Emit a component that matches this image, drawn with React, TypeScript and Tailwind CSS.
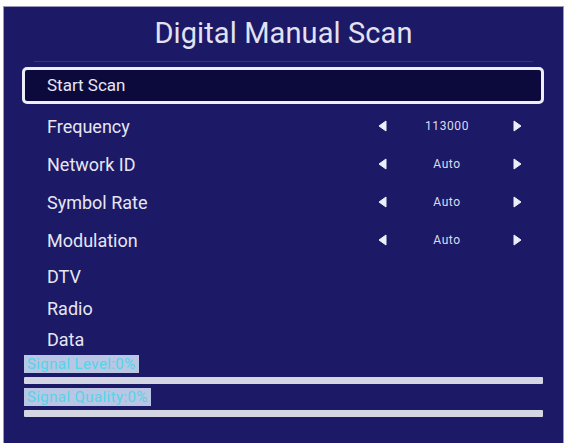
import React from 'react';

type Row = { label: string; value?: string };

const tunerRows: Row[] = [
  { label: 'Frequency', value: '113000' },
  { label: 'Network ID', value: 'Auto' },
  { label: 'Symbol Rate', value: 'Auto' },
  { label: 'Modulation', value: 'Auto' },
];

function Arrow({ dir }: { dir: 'left' | 'right' }) {
  return (
    <svg width="9" height="12" viewBox="0 0 9 12" className="shrink-0">
      {dir === 'left' ? (
        <path d="M8 1 L8 11 L1 6 Z" fill="#eceef8" strokeLinejoin="round" stroke="#eceef8" strokeWidth="1" />
      ) : (
        <path d="M1 1 L1 11 L8 6 Z" fill="#eceef8" strokeLinejoin="round" stroke="#eceef8" strokeWidth="1" />
      )}
    </svg>
  );
}

function SignalBar({ label }: { label: string }) {
  return (
    <>
      <div className="self-start bg-[#b9c6e4] px-[3px] h-[18px] flex items-center text-[15px] text-[#55d4e8] leading-none tracking-[0.4px]">
        {label}
      </div>
      <div className="mt-[4px] h-[7px] w-[519px] bg-[#d4d6e4] rounded-[1px]" />
    </>
  );
}

export default function App() {
  return (
    <div className="w-[567px] h-[443px] bg-white pt-[6px] pl-[3px] overflow-hidden font-['Roboto','Liberation_Sans',sans-serif]">
      <div className="w-[561px] h-[437px] bg-[#1c1967] border-x border-t border-[#9a9ab8] flex flex-col">
        <div className="h-[54px] flex items-center justify-center text-[29px] text-[#e2e2f2] tracking-[0.1px]">
          Digital Manual Scan
        </div>
        <div className="h-px mx-[30px] bg-[#34328a]" />

        <div className="mt-[5px] ml-[18px] w-[522px] h-[37px] border-[3px] border-[#eeeef8] rounded-[5px] bg-[#0c0a3c] flex items-center pl-[22px] text-[17px] text-[#e6e6f2]">
          Start Scan
        </div>

        <div className="mt-[3px] flex flex-col">
          {tunerRows.map((row) => (
            <div key={row.label} className="h-[38px] flex items-center pl-[43px] pr-[41px] text-[18px] text-[#e6e6f2]">
              <span className="flex-1">{row.label}</span>
              <Arrow dir="left" />
              <span className="w-[120px] text-center text-[12px] tracking-[0.6px] text-[#dcdcee]">{row.value}</span>
              <span className="ml-[6px] flex">
                <Arrow dir="right" />
              </span>
            </div>
          ))}
          <div className="h-[34px] flex items-center pl-[43px] text-[18px] text-[#e6e6f2]">DTV</div>
          <div className="h-[30px] flex items-center pl-[43px] text-[18px] text-[#e6e6f2]">Radio</div>
          <div className="h-[32px] flex items-center pl-[43px] text-[18px] text-[#e6e6f2]">Data</div>
        </div>

        <div className="ml-[20px] flex flex-col">
          <SignalBar label="Signal Level:0%" />
          <div className="mt-[4px] flex flex-col">
            <SignalBar label="Signal Quality:0%" />
          </div>
        </div>
      </div>
    </div>
  );
}
